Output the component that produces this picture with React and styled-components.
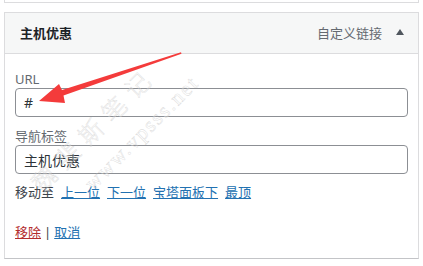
import React from "react";
import styled, { createGlobalStyle } from "styled-components";

// 메뉴 항목 설정 패널 재현

const GlobalStyle = createGlobalStyle`
  html, body {
    margin: 0;
    padding: 0;
    background: #fff;
  }
  body {
    font-family: "Noto Sans", "Noto Sans CJK SC", sans-serif;
    font-size: 13px;
    color: #3c434a;
  }
`;

const Page = styled.div`
  position: relative;
  width: 423px;
  height: 266px;
  overflow: hidden;
  background: #fff;
  padding: 0 4px;
  box-sizing: border-box;
`;

const PrevItem = styled.div`
  height: 2px;
  border: 1px solid #dcdcde;
  border-top: none;
`;

const Item = styled.div`
  margin-top: 9px;
  border: 1px solid #dcdcde;
  border-bottom-color: #c3c4c7;
`;

const Header = styled.div`
  display: flex;
  align-items: center;
  height: 40px;
  background: #f6f7f7;
  border-bottom: 1px solid #dcdcde;
  padding-left: 15px;
`;

const Title = styled.div`
  flex: 1;
  font-weight: 700;
  font-size: 13px;
  color: #1d2327;
  line-height: 20px;
`;

const ItemType = styled.span`
  font-size: 13px;
  color: #646970;
  line-height: 20px;
`;

const Toggle = styled.span`
  width: 36px;
  height: 40px;
  display: flex;
  align-items: center;
  justify-content: center;
  &::before {
    content: "";
    border-left: 4px solid transparent;
    border-right: 4px solid transparent;
    border-bottom: 6px solid #50575e;
    margin-bottom: 2px;
  }
`;

const Body = styled.div`
  padding: 16px 10px 16px 10px;
`;

const Label = styled.div`
  color: #646970;
  font-size: 13px;
  line-height: 18px;
  margin-top: ${(p) => p.$top || 0}px;
`;

const Input = styled.div`
  height: 29px;
  box-sizing: border-box;
  border: 1px solid #8c8f94;
  border-radius: 4px;
  padding: 0 8px;
  display: flex;
  align-items: center;
  font-size: 14px;
  color: #2c3338;
  background: #fff;
`;

const Row = styled.div`
  display: flex;
  align-items: center;
  gap: ${(p) => p.$gap || 0}px;
  line-height: 20px;
  margin-top: ${(p) => p.$top || 0}px;
  color: #3c434a;
`;

const Link = styled.a`
  color: ${(p) => (p.$danger ? "#b32d2e" : "#2271b1")};
  text-decoration: underline;
  cursor: pointer;
`;

const Sep = styled.span`
  color: #3c434a;
  margin: 0 3px;
`;

const Overlay = styled.svg`
  position: absolute;
  left: 0;
  top: 0;
  pointer-events: none;
`;

const Mark = styled.div`
  position: absolute;
  left: ${(p) => p.$x}px;
  top: ${(p) => p.$y}px;
  transform: translate(-50%, -50%) rotate(-45deg);
  white-space: nowrap;
  font-family: ${(p) => (p.$serif ? '"Liberation Serif", "Noto Sans CJK SC", serif' : 'inherit')};
  font-weight: 300;
  font-size: ${(p) => p.$size}px;
  letter-spacing: ${(p) => p.$ls || 0}px;
  color: transparent;
  -webkit-text-stroke: 0.35px #d4d4d4;
  line-height: 1;
  pointer-events: none;
`;

const App = () => {
  return (
    <>
      <GlobalStyle />
      <Page>
        <PrevItem />
        <Item>
          <Header>
            <Title>主机优惠</Title>
            <ItemType>自定义链接</ItemType>
            <Toggle />
          </Header>
          <Body>
            <Label>URL</Label>
            <Input>#</Input>
            <Label $top={10}>导航标签</Label>
            <Input>主机优惠</Input>
            <Row $top={8} $gap={7}>
              <span>移动至</span>
              <Link>上一位</Link>
              <Link>下一位</Link>
              <Link>宝塔面板下</Link>
              <Link>最顶</Link>
            </Row>
            <Row $top={20}>
              <Link $danger>移除</Link>
              <Sep>|</Sep>
              <Link>取消</Link>
            </Row>
          </Body>
        </Item>

        {/* 워터마크 */}
        <Mark $x={94} $y={129} $size={24} $ls={9}>
          魏斐斯笔记
        </Mark>
        <Mark $x={142} $y={133} $size={21} $ls={2} $serif>
          www.vpsss.net
        </Mark>

        {/* 빨간 화살표 */}
        <Overlay width="423" height="266" viewBox="0 0 423 266">
          <polygon
            points="181,52.3 62,90 59,84 39,101 65,103 63.5,95.5 181.5,53.7"
            fill="#f43b3b"
          />
        </Overlay>
      </Page>
    </>
  );
};

export default App;
